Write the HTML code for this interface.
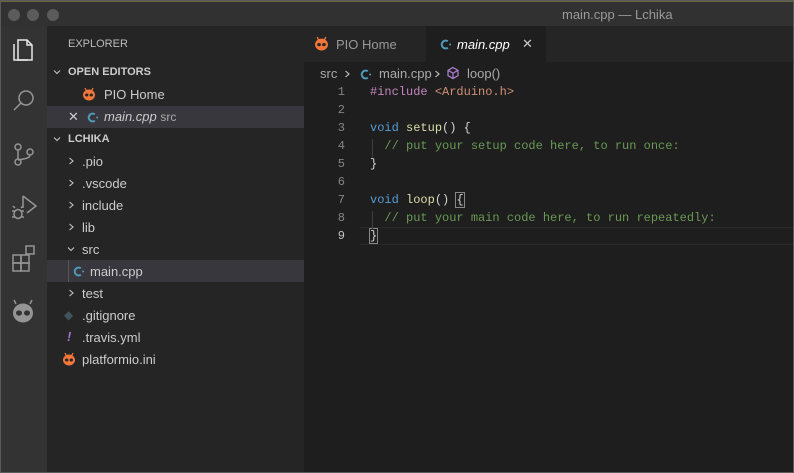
<!DOCTYPE html>
<html><head><meta charset="utf-8"><style>
*{margin:0;padding:0;box-sizing:border-box}
body{width:794px;height:473px;background:#5a5a5a;overflow:hidden;font-family:"Liberation Sans",sans-serif;position:relative}
.win{position:absolute;left:1px;top:1px;width:792px;height:471px;background:#1e1e1e;overflow:hidden}
.title{position:absolute;left:0;top:0;width:792px;height:25px;background:#313131;border-top:1px solid #6b6440}
.dot{position:absolute;top:7px;width:12px;height:12px;border-radius:50%;background:#5b5b5b}
.title .t{position:absolute;left:561px;top:5px;font-size:13px;color:#9a9a9a}
.act{position:absolute;left:0;top:25px;width:46px;height:446px;background:#333333}
.side{position:absolute;left:46px;top:25px;width:257px;height:446px;background:#252526}
.ed{position:absolute;left:303px;top:25px;width:489px;height:446px;background:#1e1e1e}
.s{position:absolute;font-size:13px;color:#cccccc;white-space:nowrap}
.b{font-weight:bold;font-size:11px;color:#cccccc}
.hl{position:absolute;left:0;width:257px;height:22px;background:#37373d}
.mono{font-family:"Liberation Mono",monospace;font-size:12px}
.ln{position:absolute;left:0;width:41px;text-align:right;color:#858585}
.cd{position:absolute;left:66px;color:#d4d4d4;white-space:pre}
.kw{color:#569cd6}.fn{color:#dcdcaa}.cm{color:#6a9955}.pp{color:#c586c0}.st{color:#ce9178}
svg.i{position:absolute}
</style></head><body>
<svg width="0" height="0" style="position:absolute">
<defs>
<symbol id="alien" viewBox="0 0 14 14"><path d="M3 1l1.5 3M11 1l-1.5 3" stroke="#f2753a" stroke-width="1.3"/><ellipse cx="7" cy="8" rx="6" ry="5.5" fill="#f2753a"/><ellipse cx="4.7" cy="8" rx="1.7" ry="1.5" fill="#252526"/><ellipse cx="9.3" cy="8" rx="1.7" ry="1.5" fill="#252526"/></symbol>
<symbol id="cpp" viewBox="0 0 14 14"><path d="M9.5 3.5A4.2 4.2 0 1 0 9.5 10.5" fill="none" stroke="#519aba" stroke-width="2.2"/><circle cx="12" cy="7" r="1.1" fill="#519aba"/></symbol>
<symbol id="chr" viewBox="0 0 10 10"><path d="M3.5 2l3.5 3-3.5 3" fill="none" stroke="#c5c5c5" stroke-width="1.1"/></symbol>
<symbol id="chd" viewBox="0 0 10 10"><path d="M2 3.5l3 3 3-3" fill="none" stroke="#c5c5c5" stroke-width="1.1"/></symbol>
</defs></svg>
<div class="win">
<div class="title"><div class="dot" style="left:7px"></div><div class="dot" style="left:26px"></div><div class="dot" style="left:46px"></div><div class="t">main.cpp — Lchika</div></div>
<div class="act">
<svg width="46" height="300" style="position:absolute;left:0;top:0" fill="none" stroke-width="1.5">
<g stroke="#e8e8e8"><path d="M17 14h9l5 5v15H17z"/><path d="M13 18v16h14"/><path d="M26 14v5h5"/></g>
<g stroke="#959595"><circle cx="25" cy="72" r="7"/><path d="M20 77l-7 7"/>
<circle cx="17" cy="121" r="3"/><circle cx="17" cy="136" r="3"/><circle cx="29" cy="126" r="3"/><path d="M17 124v9M29 129c0 4-8 4-12 5"/>
<path d="M22 170v12M22 170l13 10-9 7"/><ellipse cx="17" cy="188" rx="4" ry="4.5"/><path d="M11 185h3M20 185h3M11 191h3M20 191h3M14 182l-2-2M20 182l2-2"/>
<rect x="12" y="229" width="8" height="8"/><rect x="20" y="229" width="8" height="8"/><rect x="12" y="237" width="8" height="8"/><rect x="20" y="237" width="8" height="8"/><rect x="25" y="220" width="8" height="8"/></g>
<g fill="#959595"><ellipse cx="22" cy="287" rx="10" ry="9.5"/><path d="M15 278l-2-4M29 278l2-4" stroke="#959595"/><ellipse cx="18" cy="287" rx="3" ry="2.6" fill="#333"/><ellipse cx="26" cy="287" rx="3" ry="2.6" fill="#333"/></g>
</svg></div>
<div class="side">
<div class="s" style="left:21px;top:12px;font-size:11px;color:#bbb">EXPLORER</div>
<svg class="i" style="left:5px;top:41px" width="10" height="10"><use href="#chd"/></svg><div class="s b" style="left:21px;top:40px">OPEN EDITORS</div>
<svg class="i" style="left:35px;top:61px" width="14" height="14"><use href="#alien"/></svg><div class="s" style="left:57px;top:61px">PIO Home</div>
<div class="hl" style="top:80px"></div>
<div class="s" style="left:21px;top:83px;color:#ccc">✕</div><svg class="i" style="left:39px;top:85px" width="13" height="13"><use href="#cpp"/></svg><div class="s" style="left:57px;top:83px;font-style:italic">main.cpp <span style="font-style:normal;font-size:12px;color:#aaa">src</span></div>
<svg class="i" style="left:5px;top:108px" width="10" height="10"><use href="#chd"/></svg><div class="s b" style="left:21px;top:107px">LCHIKA</div>
<svg class="i" style="left:19px;top:130px" width="10" height="10"><use href="#chr"/></svg><div class="s" style="left:35px;top:128px">.pio</div>
<svg class="i" style="left:19px;top:152px" width="10" height="10"><use href="#chr"/></svg><div class="s" style="left:35px;top:150px">.vscode</div>
<svg class="i" style="left:19px;top:174px" width="10" height="10"><use href="#chr"/></svg><div class="s" style="left:35px;top:172px">include</div>
<svg class="i" style="left:19px;top:196px" width="10" height="10"><use href="#chr"/></svg><div class="s" style="left:35px;top:194px">lib</div>
<svg class="i" style="left:19px;top:218px" width="10" height="10"><use href="#chd"/></svg><div class="s" style="left:35px;top:216px">src</div>
<div class="hl" style="top:234px"></div><div style="position:absolute;left:21px;top:234px;width:1px;height:22px;background:#585858"></div>
<svg class="i" style="left:25px;top:239px" width="13" height="13"><use href="#cpp"/></svg><div class="s" style="left:43px;top:238px">main.cpp</div>
<svg class="i" style="left:19px;top:262px" width="10" height="10"><use href="#chr"/></svg><div class="s" style="left:35px;top:260px">test</div>
<div class="s" style="left:17px;top:282px;color:#41535b;font-size:12px">◆</div><div class="s" style="left:35px;top:282px">.gitignore</div>
<div class="s" style="left:20px;top:303px;color:#a074c4;font-style:italic;font-weight:bold">!</div><div class="s" style="left:35px;top:304px">.travis.yml</div>
<svg class="i" style="left:15px;top:326px" width="14" height="14"><use href="#alien"/></svg><div class="s" style="left:35px;top:326px">platformio.ini</div>
</div>
<div class="ed">
<div style="position:absolute;left:0;top:0;width:489px;height:36px;background:#252526"></div>
<div style="position:absolute;left:122px;top:0;width:120px;height:36px;background:#1e1e1e"></div>
<svg class="i" style="left:10px;top:10px" width="15" height="15"><use href="#alien"/></svg><div class="s" style="left:32px;top:11px;color:#999">PIO Home</div>
<svg class="i" style="left:135px;top:12px" width="13" height="13"><use href="#cpp"/></svg><div class="s" style="left:153px;top:11px;font-style:italic;color:#fff">main.cpp</div><div class="s" style="left:218px;top:10px;color:#ccc">✕</div>
<div class="s" style="left:16px;top:40px;color:#aaa">src</div><svg class="i" style="left:38px;top:43px" width="10" height="10"><use href="#chr"/></svg>
<svg class="i" style="left:55px;top:42px" width="13" height="13"><use href="#cpp"/></svg><div class="s" style="left:75px;top:40px;color:#aaa">main.cpp</div><svg class="i" style="left:128px;top:43px" width="10" height="10"><use href="#chr"/></svg>
<svg class="i" style="left:142px;top:40px" width="14" height="14" fill="none" stroke="#b180d7" stroke-width="1.2"><path d="M7 1.5l5 2.8v5.4L7 12.5 2 9.7V4.3z M2 4.3l5 2.8 5-2.8 M7 7.1v5.4"/></svg><div class="s" style="left:163px;top:40px;color:#aaa">loop()</div>
<div class="mono">
<div class="ln" style="top:59px">1</div><div class="cd" style="top:59px"><span class="pp">#include</span> <span class="st">&lt;Arduino.h&gt;</span></div>
<div class="ln" style="top:77px">2</div>
<div class="ln" style="top:95px">3</div><div class="cd" style="top:95px"><span class="kw">void</span> <span class="fn">setup</span>() {</div>
<div class="ln" style="top:113px">4</div><div class="cd" style="top:113px">  <span class="cm">// put your setup code here, to run once:</span></div>
<div class="ln" style="top:131px">5</div><div class="cd" style="top:131px">}</div>
<div class="ln" style="top:149px">6</div>
<div class="ln" style="top:167px">7</div><div class="cd" style="top:167px"><span class="kw">void</span> <span class="fn">loop</span>() <span style="outline:1px solid #888">{</span></div>
<div class="ln" style="top:185px">8</div><div class="cd" style="top:185px">  <span class="cm">// put your main code here, to run repeatedly:</span></div>
<div style="position:absolute;left:56px;top:201px;width:433px;height:18px;border-top:1px solid #2a2a2a;border-bottom:1px solid #2a2a2a"></div>
<div class="ln" style="top:203px;color:#c6c6c6">9</div><div class="cd" style="top:203px"><span style="outline:1px solid #888">}</span></div>
<div style="position:absolute;left:68px;top:113px;width:1px;height:18px;background:#404040"></div>
<div style="position:absolute;left:68px;top:185px;width:1px;height:18px;background:#404040"></div>
</div>
</div>
</div></body></html>
